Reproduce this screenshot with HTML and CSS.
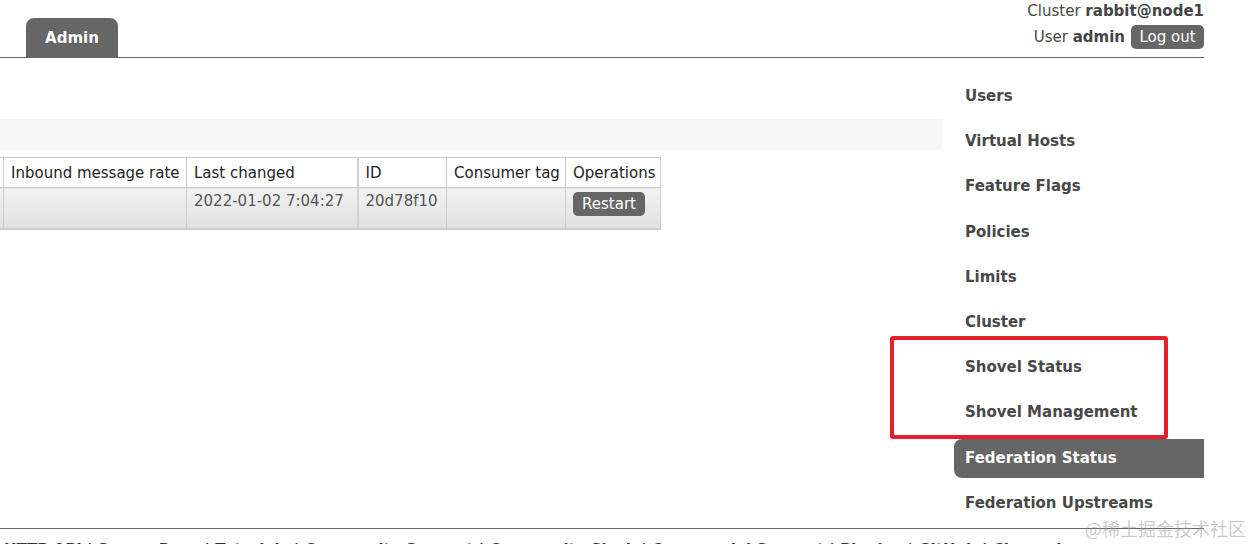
FILE: index.html
```html
<!DOCTYPE html>
<html>
<head>
<meta charset="utf-8">
<link rel="stylesheet" href="styles.css">
</head>
<body>
<div class="page">
  <header class="header">
    <nav class="tabs">
      <a class="tab active">Admin</a>
    </nav>
    <div class="login">
      <p class="login-line">Cluster <b>rabbit@node1</b></p>
      <p class="login-line user-line"><span>User <b>admin</b></span><button class="btn logout">Log out</button></p>
    </div>
  </header>
  <div class="main">
    <section class="content">
      <div class="band"></div>
      <table class="list">
        <colgroup>
          <col class="w-cut">
          <col class="w-rate">
          <col class="w-last">
          <col class="w-id">
          <col class="w-tag">
          <col class="w-ops">
        </colgroup>
        <thead>
          <tr>
            <th class="cut"></th>
            <th>Inbound message rate</th>
            <th>Last changed</th>
            <th class="sep">ID</th>
            <th>Consumer tag</th>
            <th>Operations</th>
          </tr>
        </thead>
        <tbody>
          <tr>
            <td class="cut"></td>
            <td></td>
            <td>2022-01-02 7:04:27</td>
            <td class="sep">20d78f10</td>
            <td></td>
            <td><button class="btn restart">Restart</button></td>
          </tr>
        </tbody>
      </table>
    </section>
    <aside class="sidenav">
      <ul class="nav-list">
        <li class="nav-item">Users</li>
        <li class="nav-item">Virtual Hosts</li>
        <li class="nav-item">Feature Flags</li>
        <li class="nav-item">Policies</li>
        <li class="nav-item">Limits</li>
        <li class="nav-item">Cluster</li>
        <li class="nav-item">Shovel Status</li>
        <li class="nav-item">Shovel Management</li>
        <li class="nav-item selected">Federation Status</li>
        <li class="nav-item">Federation Upstreams</li>
      </ul>
    </aside>
  </div>
  <footer class="footer">
    <p class="footer-links">HTTP API | Server Docs | Tutorials | Community Support | Community Slack | Commercial Support | Plugins | GitHub | Changelog</p>
  </footer>
  <div class="highlight"></div>
  <div class="watermark">@稀土掘金技术社区</div>
</div>
</body>
</html>
```
FILE: styles.css
```css
html, body {
  margin: 0;
  padding: 0;
  background: #fff;
}
body {
  font-family: "DejaVu Sans", Verdana, sans-serif;
  color: #484848;
  overflow: hidden;
}
.page {
  position: relative;
  width: 1249px;
  height: 544px;
  overflow: hidden;
}
.header {
  width: 1204px;
  height: 57px;
  border-bottom: 1px solid #666;
  display: flex;
  justify-content: space-between;
  align-items: flex-end;
}
.tabs {
  display: flex;
  padding-left: 26px;
}
.tab {
  display: block;
  width: 92px;
  height: 39px;
  line-height: 40px;
  text-align: center;
  background: #666;
  color: #fff;
  font-weight: bold;
  font-size: 15px;
  border-radius: 8px 8px 0 0;
}
.login {
  align-self: flex-start;
  font-size: 15px;
  color: #484848;
  text-align: right;
}
.login-line {
  margin: 0;
  height: 22px;
  line-height: 22px;
  white-space: nowrap;
}
.login-line.user-line {
  margin-top: 3px;
  height: 24px;
  display: flex;
  justify-content: flex-end;
  align-items: center;
  gap: 6px;
}
.login-line b {
  color: #444;
}
.btn {
  font-family: "DejaVu Sans", Verdana, sans-serif;
  background: #666;
  color: #fff;
  border: none;
  border-radius: 5px;
  font-size: 15px;
  padding: 0;
  height: 24px;
  line-height: 24px;
}
.logout {
  width: 73px;
}
.main {
  display: flex;
  height: 470px;
  border-bottom: 1px solid #666;
  width: 1204px;
}
.content {
  width: 942px;
  padding-top: 61px;
}
.band {
  height: 31px;
  background: #f7f7f7;
}
.list {
  margin-top: 7px;
  margin-left: -17px;
  width: 677px;
  table-layout: fixed;
  border-collapse: collapse;
  font-size: 15px;
}
.w-cut { width: 20px; }
.w-rate { width: 183px; }
.w-last { width: 171px; }
.w-id { width: 89px; }
.w-tag { width: 119px; }
.w-ops { width: 95px; }
.list th {
  font-weight: normal;
  color: #222;
  background: #fff;
  text-align: left;
  height: 28px;
  padding: 1px 7px 0;
  border: 1px solid #ccc;
  white-space: nowrap;
  overflow: hidden;
}
.list td {
  height: 36px;
  vertical-align: top;
  padding: 4px 7px 0;
  border: 1px solid #ccc;
  border-bottom: 2px solid #ccc;
  background: linear-gradient(#f2f2f2, #e0e0e0);
  color: #555;
  white-space: nowrap;
  overflow: hidden;
}
.list .sep { border-left: 2px solid #d2d2d2; }
.restart {
  width: 72px;
  height: 24px;
}
.sidenav {
  width: 250px;
  margin-left: 12px;
}
.nav-list {
  list-style: none;
  margin: 19px 0 0;
  padding: 0;
}
.nav-item {
  height: 39px;
  line-height: 39px;
  margin-bottom: 6.2px;
  padding-left: 11px;
  font-weight: bold;
  font-size: 15px;
  color: #484848;
  border-radius: 8px 0 0 8px;
}
.nav-item.selected {
  background: #666;
  color: #fff;
}
.footer {
  width: 1204px;
}
.footer-links {
  margin: 12px 0 0 4px;
  font-size: 15px;
  font-weight: bold;
  color: #333;
  white-space: nowrap;
}
.highlight {
  position: absolute;
  left: 890px;
  top: 336px;
  width: 270px;
  height: 95px;
  border: 4px solid #e61f2c;
  border-radius: 3px;
}
.watermark {
  position: absolute;
  left: 1085px;
  top: 515px;
  font-family: "Noto Sans CJK SC", sans-serif;
  font-size: 18px;
  white-space: nowrap;
  color: rgba(150, 150, 150, 0.5);
}
```
